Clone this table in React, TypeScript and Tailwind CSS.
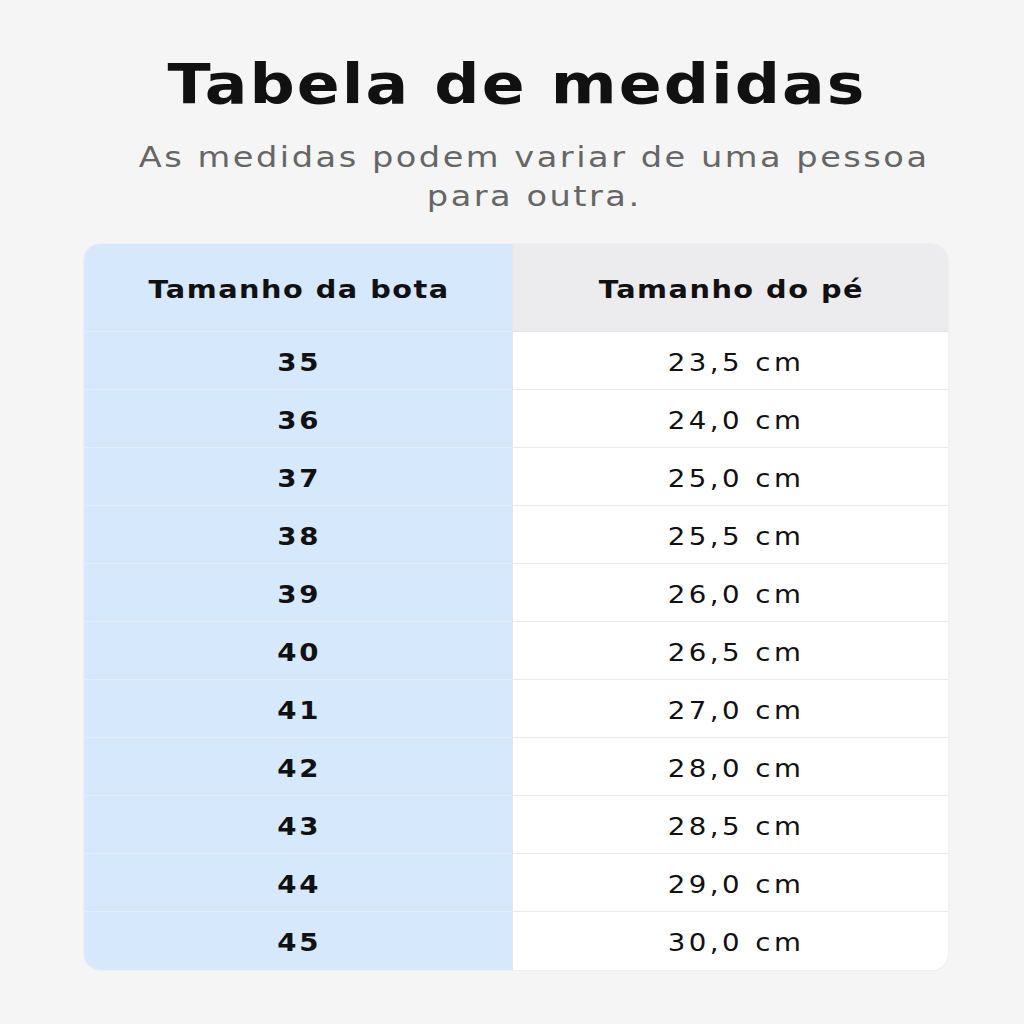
import React from "react";

const rows: [string, string][] = [
  ["35", "23,5 cm"],
  ["36", "24,0 cm"],
  ["37", "25,0 cm"],
  ["38", "25,5 cm"],
  ["39", "26,0 cm"],
  ["40", "26,5 cm"],
  ["41", "27,0 cm"],
  ["42", "28,0 cm"],
  ["43", "28,5 cm"],
  ["44", "29,0 cm"],
  ["45", "30,0 cm"],
];

export default function App() {
  return (
    <div
      className="w-[1024px] h-[1024px] bg-[#f5f5f5] flex flex-col items-center overflow-hidden"
      style={{ fontFamily: '"DejaVu Sans", sans-serif' }}
    >
      <h1 className="mt-[52px] ml-[8px] text-[55px] leading-[64px] font-bold text-[#111]">
        <span className="inline-block scale-x-[1.15] tracking-[1.8px] pl-[2px]">Tabela de medidas</span>
      </h1>
      <p className="mt-[22px] ml-[42px] w-[700px] scale-x-[1.2] text-center text-[28px] leading-[39px] text-[#666] tracking-[2.1px] pl-[2px]">
        As medidas podem variar de uma pessoa para outra.
      </p>
      <div className="mt-[28px] ml-[8px] w-[864px] rounded-[16px] overflow-hidden flex shadow-[0_0_2px_rgba(0,0,0,0.08)] bg-white">
        <div className="w-[428px] bg-[#d5e8fc] flex flex-col">
          <div className="h-[88px] pt-[4px] flex items-center justify-center text-[25px] font-bold text-[#111] border-b border-[#e3eef9]">
            <span className="inline-block scale-x-[1.15] tracking-[1.3px] pl-[1px]">Tamanho da bota</span>
          </div>
          {rows.map(([a], i) => (
            <div
              key={a}
              className={`h-[58px] pt-[4px] flex items-center justify-center text-[24px] font-bold text-[#111] ${i < rows.length - 1 ? "border-b border-[#e3eef9]" : ""}`}
            >
              <span className="inline-block scale-x-[1.15] tracking-[2.3px] pl-[2px]">{a}</span>
            </div>
          ))}
        </div>
        <div className="flex-1 flex flex-col border-l border-[#e4e8ee]">
          <div className="h-[88px] pt-[4px] bg-[#ececee] flex items-center justify-center text-[25px] font-bold text-[#111] border-b border-[#e2e2e4]">
            <span className="inline-block scale-x-[1.15] tracking-[1.3px] pl-[1px]">Tamanho do pé</span>
          </div>
          {rows.map(([a, b], i) => (
            <div
              key={a}
              className={`h-[58px] pt-[4px] flex items-center justify-center text-[24px] text-[#111] ${i < rows.length - 1 ? "border-b border-[#ebebeb]" : ""}`}
            >
              <span className="inline-block scale-x-[1.15] tracking-[3px] pl-[9px]">{b}</span>
            </div>
          ))}
        </div>
      </div>
    </div>
  );
}
